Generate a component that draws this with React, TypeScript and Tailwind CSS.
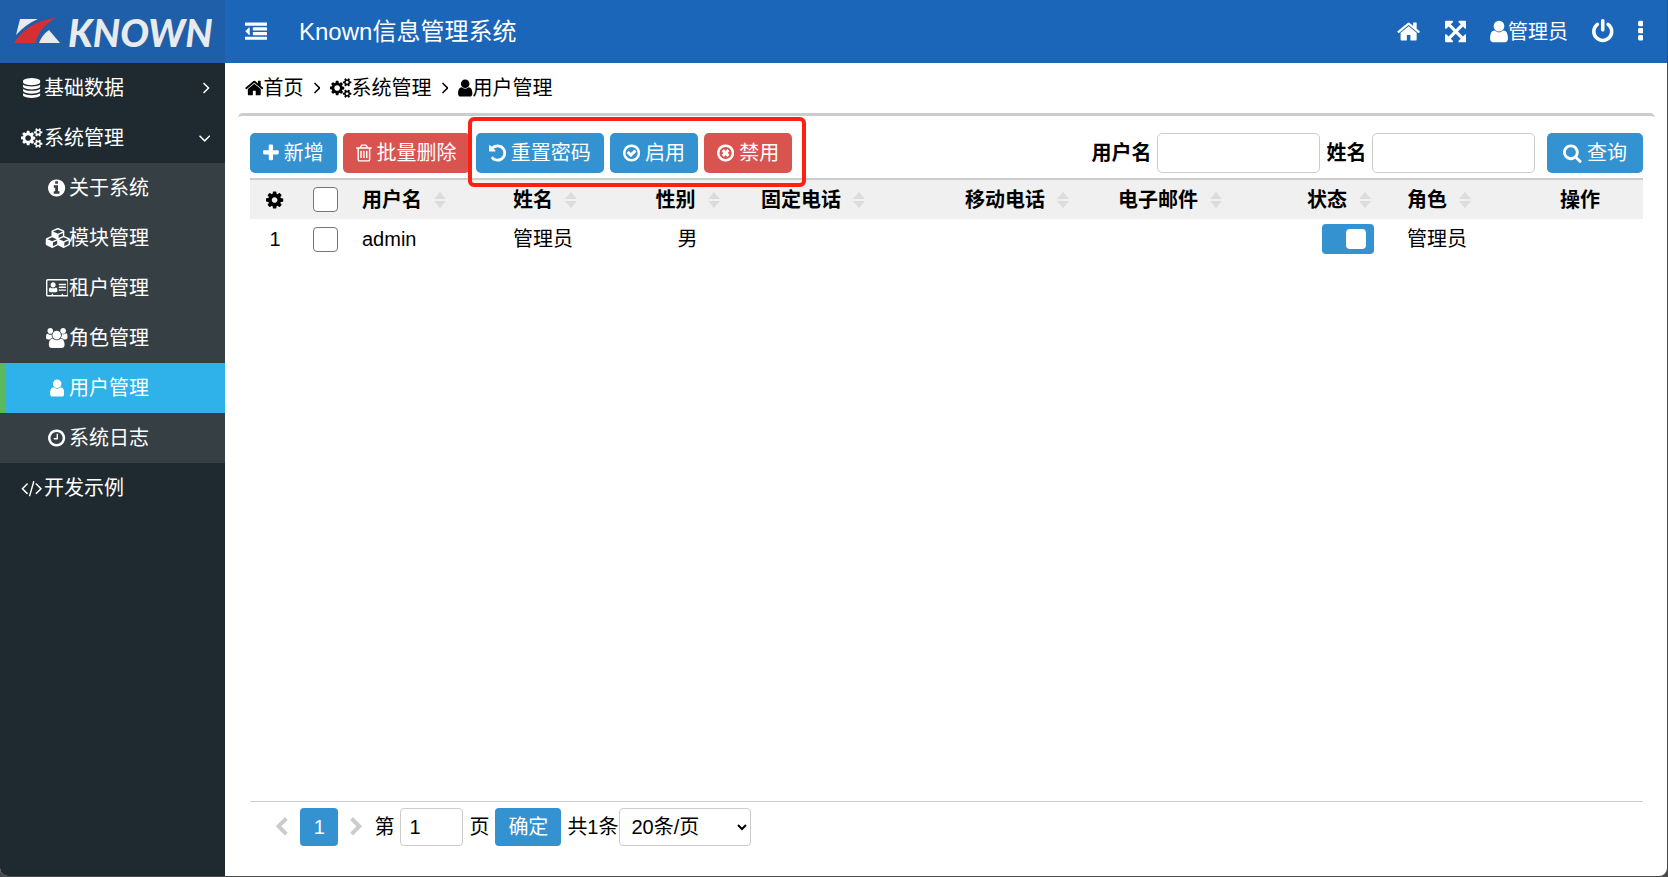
import { ReactNode, useState } from "react";

type IconData = { box: string; width: string; d: string };

const ring =
  "M1440 896q0-148-73-273t-198-198-273-73-273 73-198 198-73 273 73 273 198 198 273 73 273-73 198-198 73-273zm224 0q0 209-103 385.5t-279.5 279.5-385.5 103-385.5-103-279.5-279.5-103-385.5 103-385.5 279.5-279.5 385.5-103 385.5 103 279.5 279.5 103 385.5z";

const icons = {
  home: {
    box: "64 0 1664 1792",
    width: "w-[0.93em]",
    d: "M1472 992v480q0 26-19 45t-45 19h-384v-384h-256v384h-384q-26 0-45-19t-19-45v-480q0-1 .5-3t.5-3l575-474 575 474q1 2 1 6zm223-69l-62 74q-8 9-21 11h-3q-13 0-21-7l-692-577-692 577q-12 8-24 7-13-2-21-11l-62-74q-8-10-7-23.5t11-21.5l719-599q32-26 76-26t76 26l244 204v-195q0-14 9-23t23-9h192q14 0 23 9t9 23v408l219 182q10 8 11 21.5t-7 23.5z"
  },
  user: {
    box: "256 0 1280 1792",
    width: "w-[0.72em]",
    d: "M1536 1399q0 109-62.5 187t-150.5 78h-854q-88 0-150.5-78t-62.5-187q0-85 8.5-160.5t31.5-152 58.5-131 94-89 134.5-34.5q131 128 313 128t313-128q76 0 134.5 34.5t94 89 58.5 131 31.5 152 8.5 160.5zm-256-887q0 159-112.5 271.5t-271.5 112.5-271.5-112.5-112.5-271.5 112.5-271.5 271.5-112.5 271.5 112.5 112.5 271.5z"
  },
  users: {
    box: "64 0 1920 1792",
    width: "w-[1.07em]",
    d: "M657 896q-162 5-265 128h-134q-82 0-138-40.5t-56-118.5q0-353 124-353 6 0 43.5 21t97.5 42.5 119 21.5q67 0 133-23-5 37-5 66 0 159 93 293zm1071 637q0 120-73 189.5t-194 69.5h-874q-121 0-194-69.5t-73-189.5q0-53 3.5-103.5t14-109 26.5-108.5 43-97.5 62-81 85.5-53.5 111.5-20q10 0 43 21.5t73 48 107 48 135 21.5 135-21.5 107-48 73-48 43-21.5q61 0 111.5 20t85.5 53.5 62 81 43 97.5 26.5 108.5 14 109 3.5 103.5zm-1024-1277q0 106-75 181t-181 75-181-75-75-181 75-181 181-75 181 75 75 181zm704 384q0 159-112.5 271.5t-271.5 112.5-271.5-112.5-112.5-271.5 112.5-271.5 271.5-112.5 271.5 112.5 112.5 271.5zm576 225q0 78-56 118.5t-138 40.5h-134q-103-123-265-128 93-134 93-293 0-29-5-66 66 23 133 23 59 0 119-21.5t97.5-42.5 43.5-21q124 0 124 353zm-128-609q0 106-75 181t-181 75-181-75-75-181 75-181 181-75 181 75 75 181z"
  },
  cog: {
    box: "128 0 1536 1792",
    width: "w-[0.86em]",
    d: "M1152 896q0-106-75-181t-181-75-181 75-75 181 75 181 181 75 181-75 75-181zm512-109v222q0 12-8 23t-20 13l-185 28q-19 54-39 91 35 50 107 138 10 12 10 25t-9 23q-27 37-99 108t-94 71q-12 0-26-9l-138-108q-44 23-91 38-16 136-29 186-7 28-36 28h-222q-14 0-24.5-8.5t-11.5-21.5l-28-184q-49-16-90-37l-141 107q-10 9-25 9-14 0-25-11-126-114-165-168-7-10-7-23 0-12 8-23 15-21 51-66.5t54-70.5q-27-50-41-99l-183-27q-13-2-21-12.5t-8-23.5v-222q0-12 8-23t19-13l186-28q14-46 39-92-40-57-107-138-10-12-10-24 0-10 9-23 26-36 98.5-107.5t94.5-71.5q13 0 26 10l138 107q44-23 91-38 16-136 29-186 7-28 36-28h222q14 0 24.5 8.5t11.5 21.5l28 184q49 16 90 37l142-107q9-9 24-9 13 0 25 10 129 119 165 170 7 8 7 22 0 12-8 23-15 21-51 66.5t-54 70.5q26 50 41 98l183 28q13 2 21 12.5t8 23.5z"
  },
  cogs: {
    box: "-64 0 1920 1792",
    width: "w-[1.07em]",
    d: "M832 896q0-106-75-181t-181-75-181 75-75 181 75 181 181 75 181-75 75-181zm768 512q0-52-38-90t-90-38-90 38-38 90q0 53 37.5 90.5t90.5 37.5 90.5-37.5 37.5-90.5zm0-1024q0-52-38-90t-90-38-90 38-38 90q0 53 37.5 90.5t90.5 37.5 90.5-37.5 37.5-90.5zm-384 421v185q0 10-7 19.5t-16 10.5l-155 24q-11 35-32 76 34 48 90 115 7 11 7 20 0 12-7 19-23 30-82.5 89.5t-78.5 59.5q-11 0-21-7l-115-90q-37 19-77 31-11 108-23 155-7 24-30 24h-186q-11 0-20-7.5t-10-17.5l-23-153q-34-10-75-31l-118 89q-7 7-20 7-11 0-21-8-144-133-144-160 0-9 7-19 10-14 41-53t47-61q-23-44-35-82l-152-24q-10-1-17-9.5t-7-19.5v-185q0-10 7-19.5t16-10.5l155-24q11-35 32-76-34-48-90-115-7-11-7-20 0-12 7-20 22-30 82-89t79-59q11 0 21 7l115 90q34-18 77-32 11-108 23-154 7-24 30-24h186q11 0 20 7.5t10 17.5l23 153q34 10 75 31l118-89q8-7 20-7 11 0 21 8 144 133 144 160 0 8-7 19-12 16-42 54t-45 60q23 48 34 82l152 23q10 2 17 10.5t7 19.5zm640 533v140q0 16-149 31-12 27-30 52 51 113 51 138 0 4-4 7-122 71-124 71-8 0-46-47t-52-68q-20 2-30 2t-30-2q-14 21-52 68t-46 47q-2 0-124-71-4-3-4-7 0-25 51-138-18-25-30-52-149-15-149-31v-140q0-16 149-31 13-29 30-52-51-113-51-138 0-4 4-7 4-2 35-20t59-34 30-16q8 0 46 46.5t52 67.5q20-2 30-2t30 2q51-71 92-112l6-2q4 0 124 70 4 3 4 7 0 25-51 138 17 23 30 52 149 15 149 31zm0-1024v140q0 16-149 31-12 27-30 52 51 113 51 138 0 4-4 7-122 71-124 71-8 0-46-47t-52-68q-20 2-30 2t-30-2q-14 21-52 68t-46 47q-2 0-124-71-4-3-4-7 0-25 51-138-18-25-30-52-149-15-149-31v-140q0-16 149-31 13-29 30-52-51-113-51-138 0-4 4-7 4-2 35-20t59-34 30-16q8 0 46 46.5t52 67.5q20-2 30-2t30 2q51-71 92-112l6-2q4 0 124 70 4 3 4 7 0 25-51 138 17 23 30 52 149 15 149 31z"
  },
  database: {
    box: "128 0 1536 1792",
    width: "w-[0.86em]",
    d: "M896 768q237 0 443-43t325-127v170q0 69-103 128t-280 93.5-385 34.5-385-34.5-280-93.5-103-128v-170q119 84 325 127t443 43zm0 768q237 0 443-43t325-127v170q0 69-103 128t-280 93.5-385 34.5-385-34.5-280-93.5-103-128v-170q119 84 325 127t443 43zm0-384q237 0 443-43t325-127v170q0 69-103 128t-280 93.5-385 34.5-385-34.5-280-93.5-103-128v-170q119 84 325 127t443 43zm0-1152q208 0 385 34.5t280 93.5 103 128v128q0 69-103 128t-280 93.5-385 34.5-385-34.5-280-93.5-103-128v-128q0-69 103-128t280-93.5 385-34.5z"
  },
  info: {
    box: "128 0 1536 1792",
    width: "w-[0.86em]",
    d: "M1152 1376v-160q0-14-9-23t-23-9h-96v-512q0-14-9-23t-23-9h-320q-14 0-23 9t-9 23v160q0 14 9 23t23 9h96v320h-96q-14 0-23 9t-9 23v160q0 14 9 23t23 9h448q14 0 23-9t9-23zm-128-896v-160q0-14-9-23t-23-9h-192q-14 0-23 9t-9 23v160q0 14 9 23t23 9h192q14 0 23-9t9-23zm640 416q0 209-103 385.5t-279.5 279.5-385.5 103-385.5-103-279.5-279.5-103-385.5 103-385.5 279.5-279.5 385.5-103 385.5 103 279.5 279.5 103 385.5z"
  },
  cubes: {
    box: "-64 0 2304 1792",
    width: "w-[1.29em]",
    d: "M640 1632l384-192v-314l-384 164v342zm-64-454l404-173-404-173-404 173zm1088 454l384-192v-314l-384 164v342zm-64-454l404-173-404-173-404 173zm-448-293l384-165v-266l-384 164v267zm-64-379l441-189-441-189-441 189zm1088 518v416q0 36-19 67t-52 47l-448 224q-25 14-57 14t-57-14l-448-224q-5-2-7-4-2 2-7 4l-448 224q-25 14-57 14t-57-14l-448-224q-33-16-52-47t-19-67v-416q0-38 21.5-70t56.5-48l434-186v-400q0-38 21.5-70t56.5-48l448-192q23-10 50-10t50 10l448 192q35 16 56.5 48t21.5 70v400l434 186q36 16 57 48t21 70z"
  },
  card: {
    box: "0 0 2048 1792",
    width: "w-[1.14em]",
    d: "M1024 1131q0 64-37 106.5t-91 42.5h-512q-54 0-91-42.5t-37-106.5q0-118 29-198t115-82q88 77 240 77t240-77q86 2 115 82t29 198zm-154-521q0 96-67.5 163t-162.5 67-162.5-67-67.5-163 67.500-163 162.500-67 162.500 67 67.500 163zm922 446v64q0 14-9 23t-23 9h-576q-14 0-23-9t-9-23v-64q0-14 9-23t23-9h576q14 0 23 9t9 23zm0-256v64q0 14-9 23t-23 9h-576q-14 0-23-9t-9-23v-64q0-14 9-23t23-9h576q14 0 23 9t9 23zm0-256v64q0 14-9 23t-23 9h-576q-14 0-23-9t-9-23v-64q0-14 9-23t23-9h576q14 0 23 9t9 23zm128 960v-1248q0-13-9.500-22.500t-22.500-9.500h-1728q-13 0-22.500 9.500t-9.500 22.500v1248q0 13 9.500 22.500t22.500 9.500h352v-96q0-14 9-23t23-9h64q14 0 23 9t9 23v96h768v-96q0-14 9-23t23-9h64q14 0 23 9t9 23v96h352q13 0 22.500-9.500t9.500-22.500zm128-1248v1248q0 66-47 113t-113 47h-1728q-66 0-113-47t-47-113v-1248q0-66 47-113t113-47h1728q66 0 113 47t47 113z"
  },
  clock: {
    box: "128 0 1536 1792",
    width: "w-[0.86em]",
    d: "M1024 544v448q0 14-9 23t-23 9h-320q-14 0-23-9t-9-23v-64q0-14 9-23t23-9h224v-352q0-14 9-23t23-9h64q14 0 23 9t9 23z" + ring
  },
  code: {
    box: "-64 0 1920 1792",
    width: "w-[1.07em]",
    d: "M553 1399l-50 50q-10 10-23 10t-23-10l-466-466q-10-10-10-23t10-23l466-466q10-10 23-10t23 10l50 50q10 10 10 23t-10 23l-393 393 393 393q10 10 10 23t-10 23zm591-1067l-373 1291q-4 13-15.500 19.500t-23.500 2.500l-62-17q-13-4-19.500-15.500t-2.500-24.500l373-1291q4-13 15.500-19.500t23.500-2.500l62 17q13 4 19.500 15.500t2.500 24.500zm657 651l-466 466q-10 10-23 10t-23-10l-50-50q-10-10-10-23t10-23l393-393-393-393q-10-10-10-23t10-23l50-50q10-10 23-10t23 10l466 466q10 10 10 23t-10 23z"
  },
  outdent: {
    box: "0 0 1792 1792",
    width: "w-[1em]",
    d: "M384 544v576q0 13-9.500 22.500t-22.500 9.500q-14 0-23-9l-288-288q-9-9-9-23t9-23l288-288q9-9 23-9 13 0 22.500 9.500t9.500 22.500zm1408 768v192q0 13-9.500 22.500t-22.500 9.500h-1728q-13 0-22.500-9.500t-9.500-22.500v-192q0-13 9.500-22.500t22.500-9.500h1728q13 0 22.500 9.500t9.500 22.500zm0-384v192q0 13-9.500 22.500t-22.500 9.500h-1088q-13 0-22.500-9.500t-9.500-22.500v-192q0-13 9.500-22.500t22.500-9.500h1088q13 0 22.500 9.500t9.500 22.500zm0-384v192q0 13-9.500 22.500t-22.500 9.500h-1088q-13 0-22.500-9.500t-9.500-22.500v-192q0-13 9.500-22.500t22.500-9.500h1088q13 0 22.500 9.500t9.500 22.500zm0-384v192q0 13-9.500 22.500t-22.500 9.500h-1728q-13 0-22.500-9.500t-9.500-22.500v-192q0-13 9.500-22.500t22.500-9.500h1728q13 0 22.500 9.500t9.500 22.500z"
  },
  expand: {
    box: "128 0 1536 1792",
    width: "w-[0.86em]",
    d: "M1411 541l-355 355 355 355 144-144q29-31 70-14 39 17 39 59v448q0 26-19 45t-45 19h-448q-42 0-59-40-17-39 14-69l144-144-355-355-355 355 144 144q31 30 14 69-17 40-59 40h-448q-26 0-45-19t-19-45v-448q0-42 40-59 39-17 69 14l144 144 355-355-355-355-144 144q-19 19-45 19-12 0-24-5-40-17-40-59v-448q0-26 19-45t45-19h448q42 0 59 40 17 39-14 69l-144 144 355 355 355-355-144-144q-31-30-14-69 17-40 59-40h448q26 0 45 19t19 45v448q0 42-39 59-13 5-25 5-26 0-45-19z"
  },
  power: {
    box: "128 0 1536 1792",
    width: "w-[0.86em]",
    d: "M1664 896q0 156-61 298t-164 245-245 164-298 61-298-61-245-164-164-245-61-298q0-182 80.500-343t226.500-270q43-32 95.500-25t83.500 50q32 42 24.500 94.500t-49.500 84.500q-98 74-151.500 181t-53.500 228q0 104 40.500 198.500t109.500 163.500 163.500 109.500 198.500 40.500 198.500-40.500 163.500-109.500 109.500-163.500 40.500-198.500q0-121-53.500-228t-151.500-181q-42-32-49.500-84.500t24.500-94.500q31-43 84-50t95 25q146 109 226.500 270t80.500 343zm-640-768v640q0 52-38 90t-90 38-90-38-38-90v-640q0-52 38-90t90-38 90 38 38 90z"
  },
  more: {
    box: "704 0 384 1792",
    width: "w-[0.22em]",
    d: "M1088 1248v192q0 40-28 68t-68 28h-192q-40 0-68-28t-28-68v-192q0-40 28-68t68-28h192q40 0 68 28t28 68zm0-512v192q0 40-28 68t-68 28h-192q-40 0-68-28t-28-68v-192q0-40 28-68t68-28h192q40 0 68 28t28 68zm0-512v192q0 40-28 68t-68 28h-192q-40 0-68-28t-28-68v-192q0-40 28-68t68-28h192q40 0 68 28t28 68z"
  },
  plus: {
    box: "192 0 1408 1792",
    width: "w-[0.79em]",
    d: "M1600 736v192q0 40-28 68t-68 28h-416v416q0 40-28 68t-68 28h-192q-40 0-68-28t-28-68v-416h-416q-40 0-68-28t-28-68v-192q0-40 28-68t68-28h416v-416q0-40 28-68t68-28h192q40 0 68 28t28 68v416h416q40 0 68 28t28 68z"
  },
  trash: {
    box: "192 0 1408 1792",
    width: "w-[0.79em]",
    d: "M704 736v576q0 14-9 23t-23 9h-64q-14 0-23-9t-9-23v-576q0-14 9-23t23-9h64q14 0 23 9t9 23zm256 0v576q0 14-9 23t-23 9h-64q-14 0-23-9t-9-23v-576q0-14 9-23t23-9h64q14 0 23 9t9 23zm256 0v576q0 14-9 23t-23 9h-64q-14 0-23-9t-9-23v-576q0-14 9-23t23-9h64q14 0 23 9t9 23zm128 724v-948h-896v948q0 22 7 40.500t14.500 27 10.500 8.500h832q3 0 10.500-8.500t14.500-27 7-40.500zm-672-1076h448l-48-117q-7-9-17-11h-317q-10 2-17 11zm928 32v64q0 14-9 23t-23 9h-96v948q0 83-47 143.500t-113 60.500h-832q-66 0-113-58.500t-47-141.500v-952h-96q-14 0-23-9t-9-23v-64q0-14 9-23t23-9h309l70-167q15-37 54-63t79-26h320q40 0 79 26t54 63l70 167h309q14 0 23 9t9 23z"
  },
  undo: {
    box: "128 0 1536 1792",
    width: "w-[0.86em]",
    d: "M1664 896q0 156-61 298t-164 245-245 164-298 61q-172 0-327-72.500t-264-204.500q-7-10-6.500-22.500t8.500-20.500l137-138q10-9 25-9 16 2 23 12 73 95 179 147t225 52q104 0 198.500-40.500t163.500-109.500 109.500-163.500 40.500-198.500-40.500-198.500-109.500-163.500-163.500-109.500-198.500-40.500q-98 0-188 35.500t-160 101.500l137 138q31 30 14 69-17 40-59 40h-448q-26 0-45-19t-19-45v-448q0-42 40-59 39-17 69 14l130 129q107-101 244.500-156.500t284.500-55.500q156 0 298 61t245 164 164 245 61 298z"
  },
  enable: {
    box: "128 0 1536 1792",
    width: "w-[0.86em]",
    d: "M1299 813l-422 422q-19 19-45 19t-45-19l-294-294q-19-19-19-45t19-45l102-102q19-19 45-19t45 19l147 147 275-275q19-19 45-19t45 19l102 102q19 19 19 45t-19 45z" + ring
  },
  disable: {
    box: "128 0 1536 1792",
    width: "w-[0.86em]",
    d: "M1225 1081l-146 146q-10 10-23 10t-23-10l-137-137-137 137q-10 10-23 10t-23-10l-146-146q-10-10-10-23t10-23l137-137-137-137q-10-10-10-23t10-23l146-146q10-10 23-10t23 10l137 137 137-137q10-10 23-10t23 10l146 146q10 10 10 23t-10 23l-137 137 137 137q10 10 10 23t-10 23z" + ring
  },
  search: {
    box: "64 0 1664 1792",
    width: "w-[0.93em]",
    d: "M1216 832q0-185-131.500-316.500t-316.500-131.500-316.500 131.500-131.500 316.500 131.500 316.500 316.500 131.500 316.500-131.500 131.500-316.500zm512 832q0 52-38 90t-90 38q-54 0-90-38l-343-342q-179 124-399 124-143 0-273.500-55.500t-225-150-150-225-55.500-273.500 55.500-273.500 150-225 225-150 273.500-55.500 273.500 55.500 225 150 150 225 55.500 273.500q0 220-124 399l343 343q37 37 37 90z"
  },
  prev: {
    box: "410 0 1100 1792",
    width: "w-[0.61em]",
    d: "M1427 301l-531 531 531 531q19 19 19 45t-19 45l-166 166q-19 19-45 19t-45-19l-742-742q-19-19-19-45t19-45l742-742q19-19 45-19t45 19l166 166q19 19 19 45t-19 45z"
  },
  next: {
    box: "310 0 1100 1792",
    width: "w-[0.61em]",
    d: "M1363 877l-742 742q-19 19-45 19t-45-19l-166-166q-19-19-19-45t19-45l531-531-531-531q-19-19-19-45t19-45l166-166q19-19 45-19t45 19l742 742q19 19 19 45t-19 45z"
  },
  angleRight: {
    box: "580 64 600 1792",
    width: "w-[0.33em]",
    d: "M1171 960q0 13-10 23l-466 466q-10 10-23 10t-23-10l-50-50q-10-10-10-23t10-23l393-393-393-393q-10-10-10-23t10-23l50-50q10-10 23-10t23 10l466 466q10 10 10 23z"
  },
  angleDown: {
    box: "384 0 1024 1792",
    width: "w-[0.57em]",
    d: "M1395 736q0 13-10 23l-466 466q-10 10-23 10t-23-10l-466-466q-10-10-10-23t10-23l50-50q10-10 23-10t23 10l393 393 393-393q10-10 23-10t23 10l50 50q10 10 10 23z"
  }
} satisfies Record<string, IconData>;

type IconName = keyof typeof icons;

function Icon({ name }: { name: IconName }) {
  const icon = icons[name];
  return (
    <svg
      viewBox={icon.box}
      fill="currentColor"
      aria-hidden="true"
      className={`h-[1em] max-w-none shrink-0 ${icon.width}`}
    >
      <path d={icon.d} />
    </svg>
  );
}

// wide glyphs run over the right edge of the slot
function MenuIcon({ name }: { name: IconName }) {
  return (
    <span className="w-6 shrink-0 [&>svg]:mx-auto">
      <Icon name={name} />
    </span>
  );
}

function Logo() {
  return (
    <div className="flex h-full w-[225px] shrink-0 items-center gap-1.5 bg-[#1f5ea9] pl-3.5 text-[#e8eaec]">
      <svg viewBox="0 0 48 28" className="h-7 w-12 shrink-0" aria-hidden="true">
        <path d="M6 1h18Q12 6 2 17z" fill="#e8eaec" />
        <path d="M0 25Q14 3 42 0 27 7 21 25z" fill="#d62f33" />
        <path d="M35 12l11 13H25q3-8 10-13z" fill="#e8eaec" />
      </svg>
      <span className="font-['Lato'] text-[38px] leading-none font-black italic">KNOWN</span>
    </div>
  );
}

const subMenu: { icon: IconName; label: string }[] = [
  { icon: "info", label: "关于系统" },
  { icon: "cubes", label: "模块管理" },
  { icon: "card", label: "租户管理" },
  { icon: "users", label: "角色管理" },
  { icon: "user", label: "用户管理" },
  { icon: "clock", label: "系统日志" }
];

function MenuItem({ icon, label, arrow }: { icon: IconName; label: string; arrow?: IconName }) {
  return (
    <a href="#" className="flex h-[50px] items-center pr-[15px] pl-5 text-white">
      <MenuIcon name={icon} />
      <span className="flex-1">{label}</span>
      {arrow ? <Icon name={arrow} /> : null}
    </a>
  );
}

function Sidebar() {
  const [active, setActive] = useState("用户管理");

  return (
    <nav className="w-[225px] shrink-0 bg-[#1e2a2f]">
      <MenuItem icon="database" label="基础数据" arrow="angleRight" />
      <MenuItem icon="cogs" label="系统管理" arrow="angleDown" />
      <ul className="bg-[#353f44]">
        {subMenu.map((item) => (
          <li key={item.label}>
            <a
              href="#"
              onClick={() => setActive(item.label)}
              className={`flex h-[50px] items-center border-l-6 pl-[39px] text-white ${
                active === item.label ? "border-[#5cb85c] bg-[#2fb1ea]" : "border-transparent"
              }`}
            >
              <MenuIcon name={item.icon} />
              {item.label}
            </a>
          </li>
        ))}
      </ul>
      <MenuItem icon="code" label="开发示例" />
    </nav>
  );
}

function Button({ icon, danger = false, wide = false, children }: { icon?: IconName; danger?: boolean; wide?: boolean; children: ReactNode }) {
  return (
    <button
      type="button"
      className={`flex h-10 items-center gap-[5px] rounded-[5px] text-white ${wide ? "px-4" : "px-[13px]"} ${
        danger ? "bg-[#d9534f]" : "bg-[#3492d1]"
      }`}
    >
      {icon ? <Icon name={icon} /> : null}
      {children}
    </button>
  );
}

function SearchField({ id, label }: { id: string; label: string }) {
  return (
    <div className="flex items-center gap-1.5">
      <label htmlFor={id} className="font-bold">
        {label}
      </label>
      <input id={id} type="text" className="h-10 w-[163px] rounded-[5px] border border-[#ccc] px-2" />
    </div>
  );
}

function Toolbar() {
  return (
    <div className="flex items-center justify-between">
      <div className="flex gap-1.5">
        <Button icon="plus">新增</Button>
        <Button icon="trash" danger>
          批量删除
        </Button>
        <div className="relative flex gap-1.5">
          <Button icon="undo">重置密码</Button>
          <Button icon="enable">启用</Button>
          <Button icon="disable" danger>
            禁用
          </Button>
          <div className="pointer-events-none absolute -top-4 -right-3.5 -bottom-3.5 -left-2 rounded-md border-4 border-[#ff2013]" />
        </div>
      </div>
      <div className="flex items-center gap-1.5">
        <SearchField id="userName" label="用户名" />
        <SearchField id="name" label="姓名" />
        <div className="pl-1.5">
          <Button icon="search" wide>
            查询
          </Button>
        </div>
      </div>
    </div>
  );
}

function SortIcon() {
  return (
    <svg viewBox="0 0 12 16" className="h-4 w-3 shrink-0" fill="#dcdcdc" aria-hidden="true">
      <path d="M6 0l6 7H0zM6 16l6-7H0z" />
    </svg>
  );
}

const columns = [
  { title: "用户名", width: "w-[151px]" },
  { title: "姓名", width: "w-[119px]" },
  { title: "性别", width: "w-[129px]", center: true },
  { title: "固定电话", width: "w-auto" },
  { title: "移动电话", width: "w-[153px]" },
  { title: "电子邮件", width: "w-[189px]" },
  { title: "状态", width: "w-[100px]" },
  { title: "角色", width: "w-[116px]" }
];

const checkboxClass = "block size-[25px] appearance-none rounded-[4px] border border-[#767676] bg-white checked:bg-[#3492d1]";

function UserTable() {
  const [enabled, setEnabled] = useState(true);

  return (
    <table className="w-full table-fixed border-t-2 border-[#ccc]">
      <thead className="bg-[#f0f0f0]">
        <tr className="h-10">
          <th className="w-[50px]">
            <button type="button" aria-label="列设置" className="flex w-full justify-center">
              <Icon name="cog" />
            </button>
          </th>
          <th className="w-[50px]">
            <input type="checkbox" aria-label="全选" className={`mx-auto ${checkboxClass}`} />
          </th>
          {columns.map((column) => (
            <th key={column.title} className={`pr-1.5 pl-3 ${column.width}`}>
              <div className={`flex items-center gap-3 ${column.center ? "justify-center" : ""}`}>
                {column.title}
                <SortIcon />
              </div>
            </th>
          ))}
          <th className="w-[132px] pr-1.5 pl-3">操作</th>
        </tr>
      </thead>
      <tbody>
        <tr className="h-10">
          <td className="text-center">1</td>
          <td>
            <input type="checkbox" aria-label="选择 admin" className={`mx-auto ${checkboxClass}`} />
          </td>
          <td className="pl-3">admin</td>
          <td className="pl-3">管理员</td>
          <td className="pr-1.5 pl-3 text-center">男</td>
          <td />
          <td />
          <td />
          <td className="pr-1.5 pl-3">
            <button
              type="button"
              role="switch"
              aria-checked={enabled}
              aria-label="状态"
              onClick={() => setEnabled(!enabled)}
              className={`mx-auto flex h-[30px] w-[52px] items-center rounded-[4px] px-2 ${
                enabled ? "justify-end bg-[#3492d1]" : "bg-[#ccc]"
              }`}
            >
              <span className="size-5 rounded-[4px] bg-white" />
            </button>
          </td>
          <td className="pl-3">管理员</td>
          <td />
        </tr>
      </tbody>
    </table>
  );
}

function Pager() {
  return (
    <div className="flex items-center gap-1.5 border-t border-[#ccc] pt-1.5 pb-[30px] pl-[26px]">
      <div className="flex items-center gap-3">
        <button type="button" aria-label="上一页" className="text-[#ccc]">
          <Icon name="prev" />
        </button>
        <button type="button" className="size-[38px] rounded-[4px] bg-[#3492d1] text-white">
          1
        </button>
        <button type="button" aria-label="下一页" className="text-[#ccc]">
          <Icon name="next" />
        </button>
        <label htmlFor="page">第</label>
      </div>
      <input id="page" type="text" defaultValue="1" className="h-[38px] w-[63px] rounded-[4px] border border-[#ccc] px-2" />
      <span>页</span>
      <button type="button" className="h-[38px] rounded-[4px] bg-[#3492d1] px-[13px] text-white">
        确定
      </button>
      <div className="flex items-center">
        共1条
        <select aria-label="每页条数" className="h-[38px] w-[132px] rounded-[4px] border border-[#ccc] bg-white px-2">
          <option>20条/页</option>
          <option>50条/页</option>
          <option>100条/页</option>
        </select>
      </div>
    </div>
  );
}

export default function App() {
  return (
    <div className="bg-[#4a4a4a] pr-px pb-px font-['Liberation_Sans','Noto_Sans_CJK_SC',sans-serif] text-xl leading-7 text-black">
      <div className="flex h-[calc(100vh-1px)] flex-col overflow-hidden rounded-b-lg bg-white">
        <header className="flex h-[63px] shrink-0 items-center bg-[#1b66b9] text-white">
          <Logo />
          <button type="button" aria-label="折叠菜单" className="ml-5 text-[22px]">
            <Icon name="outdent" />
          </button>
          <h1 className="ml-8 flex-1 text-2xl">Known信息管理系统</h1>
          <div className="flex items-center pr-6 text-[25px]">
            <a href="#" aria-label="首页">
              <Icon name="home" />
            </a>
            <button type="button" aria-label="全屏" className="ml-6">
              <Icon name="expand" />
            </button>
            <a href="#" className="ml-6 flex items-center">
              <Icon name="user" />
              <span className="text-xl">管理员</span>
            </a>
            <button type="button" aria-label="退出" className="ml-6">
              <Icon name="power" />
            </button>
            <button type="button" aria-label="更多" className="ml-6">
              <Icon name="more" />
            </button>
          </div>
        </header>
        <div className="flex min-h-0 flex-1">
          <Sidebar />
          <main className="flex min-w-0 flex-1 flex-col pr-3 pl-[13px]">
            <div className="flex h-[50px] shrink-0 items-center gap-2.5 pl-[7px]">
              <a href="#" className="flex items-center">
                <Icon name="home" />
                首页
              </a>
              <Icon name="angleRight" />
              <span className="flex items-center">
                <Icon name="cogs" />
                系统管理
              </span>
              <Icon name="angleRight" />
              <span className="flex items-center">
                <Icon name="user" />
                用户管理
              </span>
            </div>
            <section className="flex flex-1 flex-col rounded-[5px] border-t-3 border-[#ccc] px-3 pt-[17px]">
              <Toolbar />
              <div className="flex-1 pt-[5px]">
                <UserTable />
              </div>
              <Pager />
            </section>
          </main>
        </div>
      </div>
    </div>
  );
}
